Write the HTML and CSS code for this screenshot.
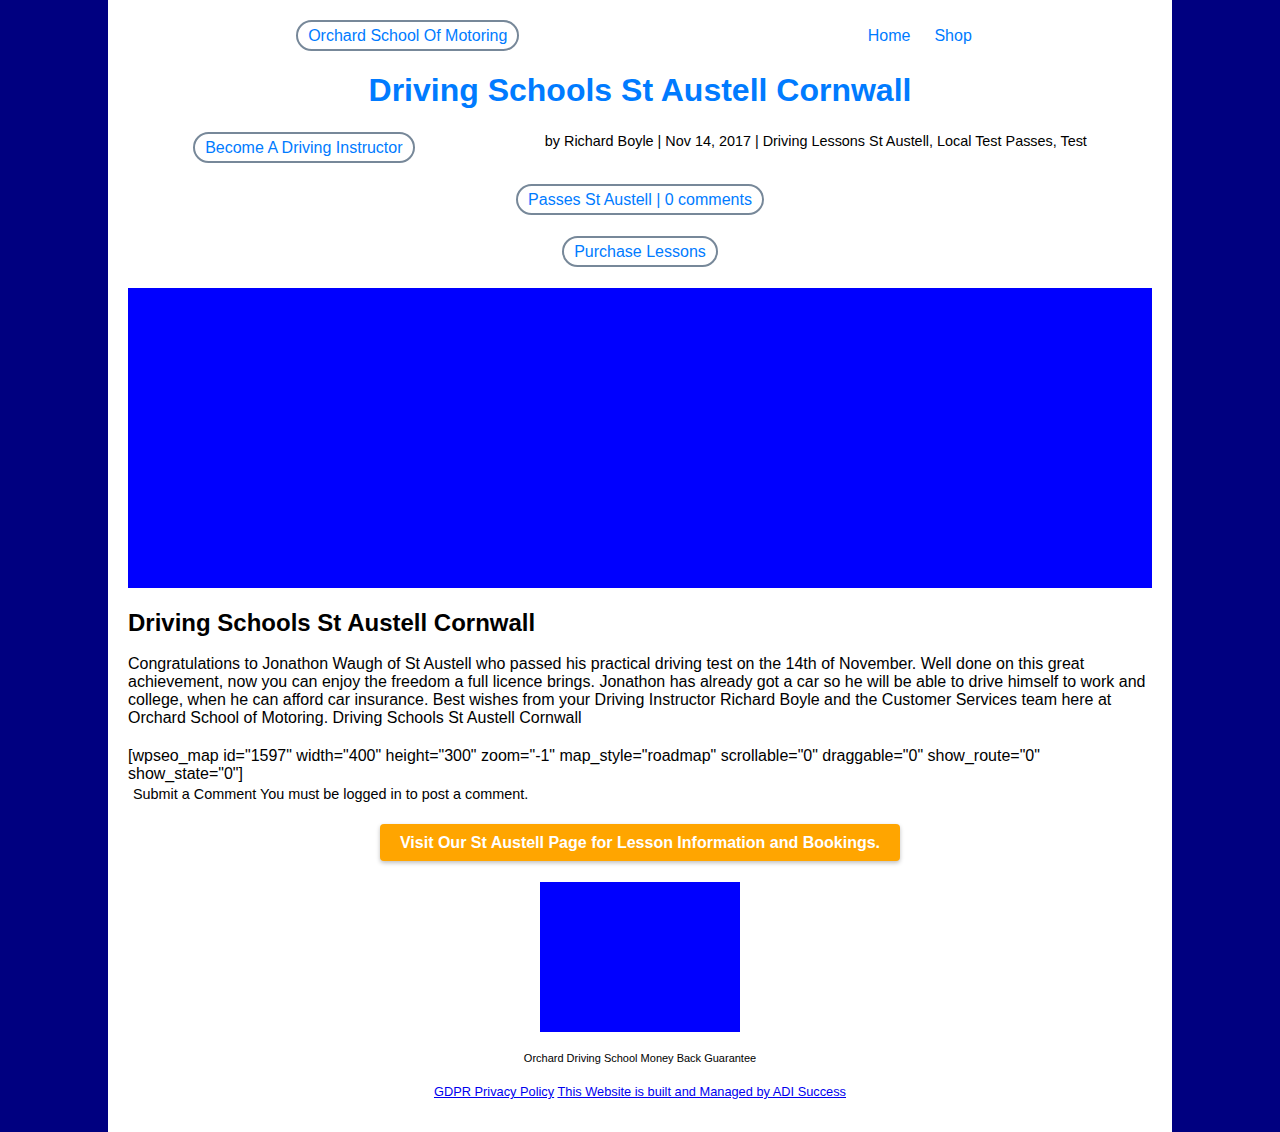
FILE: index.html
```html
<!DOCTYPE html>
<html lang="en">
<head>
<meta charset="utf-8">
<title>Driving Schools St Austell Cornwall</title>
<link rel="stylesheet" href="styles.css">
</head>
<body>
<div class="page">
  <header class="site-header">
    <a class="pill" href="#">Orchard School Of Motoring</a>
    <nav class="nav">
      <a href="#">Home</a>
      <a href="#">Shop</a>
    </nav>
  </header>

  <h1 class="title">Driving Schools St Austell Cornwall</h1>

  <div class="meta-row">
    <a class="pill" href="#">Become A Driving Instructor</a>
    <p class="meta">by Richard Boyle | Nov 14, 2017 | Driving Lessons St Austell, Local Test Passes, Test</p>
  </div>

  <div class="center-row"><a class="pill" href="#">Passes St Austell | 0 comments</a></div>
  <div class="center-row"><a class="pill" href="#">Purchase Lessons</a></div>

  <div class="hero"></div>

  <article class="post">
    <h2 class="post-title">Driving Schools St Austell Cornwall</h2>
    <p class="post-text">Congratulations to Jonathon Waugh of St Austell who passed his practical driving test on the 14th of November. Well done on this great achievement, now you can enjoy the freedom a full licence brings. Jonathon has already got a car so he will be able to drive himself to work and college, when he can afford car insurance. Best wishes from your Driving Instructor Richard Boyle and the Customer Services team here at Orchard School of Motoring. Driving Schools St Austell Cornwall</p>
    <p class="shortcode">[wpseo_map id="1597" width="400" height="300" zoom="-1" map_style="roadmap" scrollable="0" draggable="0" show_route="0" show_state="0"]</p>
    <p class="comment-note">Submit a Comment You must be logged in to post a comment.</p>
  </article>

  <div class="cta-row"><a class="cta" href="#">Visit Our St Austell Page for Lesson Information and Bookings.</a></div>

  <div class="guarantee"></div>
  <p class="caption">Orchard Driving School Money Back Guarantee</p>
  <p class="footer-links"><a href="#">GDPR Privacy Policy</a> <a href="#">This Website is built and Managed by ADI Success</a></p>
</div>
</body>
</html>
```
FILE: styles.css
```css
html, body {
  margin: 0;
  padding: 0;
}

body {
  background: #000080;
  font-family: "Liberation Sans", Arial, sans-serif;
  color: #000;
}

.page {
  width: 1064px;
  margin: 0 auto;
  background: #fff;
  padding: 20px 20px 20px;
  box-sizing: border-box;
  min-height: 100vh;
}

.pill {
  display: inline-block;
  border: 2px solid #778899;
  border-radius: 16px;
  padding: 4px 10px;
  font-size: 16px;
  line-height: 19px;
  color: #007bff;
  text-decoration: none;
}

.site-header {
  display: flex;
  justify-content: space-around;
  align-items: center;
}

.nav {
  display: flex;
}

.nav a {
  padding: 0 12px;
  font-size: 16px;
  line-height: 19px;
  color: #007bff;
  text-decoration: none;
}

.title {
  margin: 21px 0 23px;
  text-align: center;
  font-size: 32px;
  font-weight: bold;
  color: #007bff;
  line-height: 37px;
}

.meta-row {
  display: flex;
  justify-content: space-around;
  align-items: flex-start;
}

.meta {
  margin: 0;
  padding-top: 1px;
  font-size: 14.4px;
  line-height: 16px;
  white-space: nowrap;
}

.center-row {
  display: flex;
  justify-content: center;
  margin-top: 21px;
}

.hero {
  margin-top: 21px;
  height: 300px;
  background: #0000ff;
}

.post-title {
  margin: 21px 0 18px;
  font-size: 24px;
  line-height: 28px;
  font-weight: bold;
}

.post-text {
  margin: 0 0 20px;
  font-size: 16px;
  line-height: 18px;
}

.shortcode {
  margin: 0;
  font-size: 16px;
  line-height: 18px;
}

.comment-note {
  margin: 3px 0 0;
  padding-left: 5px;
  font-size: 14.4px;
  line-height: 17px;
}

.cta-row {
  display: flex;
  justify-content: center;
  margin-top: 21px;
}

.cta {
  display: inline-block;
  width: 520px;
  box-sizing: border-box;
  text-align: center;
  background: #ffa500;
  color: #fff;
  font-weight: bold;
  font-size: 16px;
  line-height: 19px;
  padding: 9px 10px;
  border-radius: 4px;
  text-decoration: none;
  box-shadow: 0 2px 4px rgba(0, 0, 0, 0.25);
}

.guarantee {
  width: 200px;
  height: 150px;
  margin: 21px auto 0;
  background: #0000ff;
}

.caption {
  margin: 20px 0 0;
  text-align: center;
  font-size: 11px;
  line-height: 13px;
}

.footer-links {
  margin: 19px 0 0;
  text-align: center;
  font-size: 12.8px;
  line-height: 15px;
}

.footer-links a {
  color: #0000ee;
  text-decoration: underline;
}
```
